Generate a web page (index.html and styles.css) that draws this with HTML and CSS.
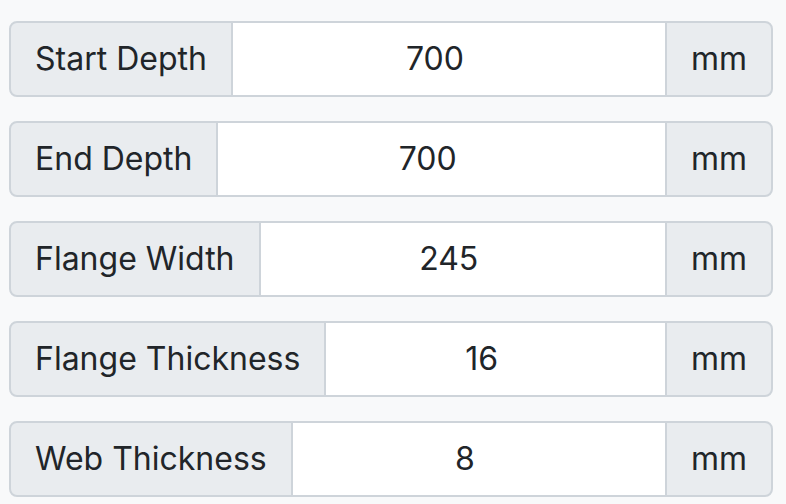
FILE: index.html
```html
<!DOCTYPE html>
<html>
<head>
    <title>Beam Dimensions</title>
    <link rel="stylesheet" href="styles.css">
</head>
<body>
    <div class="form">
        <div class="input-group">
            <span class="addon">Start Depth</span>
            <input class="field" type="text" value="700">
            <span class="addon">mm</span>
        </div>
        <div class="input-group">
            <span class="addon">End Depth</span>
            <input class="field" type="text" value="700">
            <span class="addon">mm</span>
        </div>
        <div class="input-group">
            <span class="addon">Flange Width</span>
            <input class="field" type="text" value="245">
            <span class="addon">mm</span>
        </div>
        <div class="input-group">
            <span class="addon">Flange Thickness</span>
            <input class="field" type="text" value="16">
            <span class="addon">mm</span>
        </div>
        <div class="input-group">
            <span class="addon">Web Thickness</span>
            <input class="field" type="text" value="8">
            <span class="addon">mm</span>
        </div>
    </div>
</body>
</html>
```

FILE: styles.css
```css
body {
    margin: 0;
    background-color: #f8f9fa;
    font-family: Inter, "Noto Sans", sans-serif;
    color: #212529;
}
.form {
    width: 764px;
    padding: 21px 0 0 9px;
    display: flex;
    flex-direction: column;
    gap: 24px;
}
.input-group {
    display: flex;
    align-items: stretch;
}
.addon {
    padding: 12px 24px;
    font-size: 32px;
    line-height: 48px;
    background-color: #e9ecef;
    border: 2px solid #ced4da;
    white-space: nowrap;
}
.addon:first-child {
    border-radius: 8px 0 0 8px;
}
.addon:last-child {
    border-radius: 0 8px 8px 0;
}
.field {
    flex: 1;
    min-width: 0;
    margin: 0;
    padding: 12px 52px 12px 24px;
    font-family: inherit;
    font-size: 32px;
    line-height: 48px;
    color: #212529;
    text-align: center;
    background-color: #fff;
    border: 2px solid #ced4da;
    border-left: none;
    border-right: none;
    outline: none;
}
```
